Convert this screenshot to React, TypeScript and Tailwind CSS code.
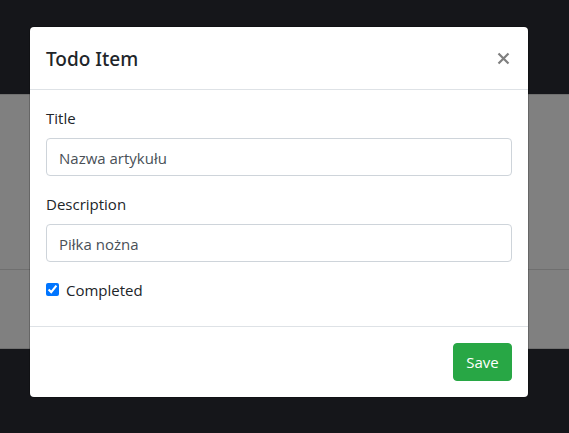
import { useState } from "react";

type TextFieldProps = {
  id: string;
  label: string;
  value: string;
  onChange: (value: string) => void;
};

function TextField({ id, label, value, onChange }: TextFieldProps) {
  return (
    <div className="mb-4">
      <label htmlFor={id} className="mb-2 block">
        {label}
      </label>
      <input
        id={id}
        type="text"
        value={value}
        onChange={(e) => onChange(e.target.value)}
        className="block h-[38px] w-full rounded border border-[#ced4da] bg-white px-3 pt-0.5 text-[#495057] outline-none focus:border-[#80bdff]"
      />
    </div>
  );
}

function Backdrop() {
  return (
    <div className="flex min-h-screen flex-col bg-[#15161a]" aria-hidden="true">
      <div className="h-[94px]" />
      <div className="border-y border-[#6f6f6f] bg-[#808080]">
        <div className="h-[174px]" />
        <div className="h-[79px] border-t border-[#6f6f6f]" />
      </div>
    </div>
  );
}

export default function App() {
  const [title, setTitle] = useState("Nazwa artykułu");
  const [description, setDescription] = useState("Piłka nożna");
  const [completed, setCompleted] = useState(true);

  return (
    <div className="relative text-[15px] leading-6 text-[#212529] [font-family:'Open_Sans','Noto_Sans',sans-serif]">
      <Backdrop />
      <div className="absolute inset-0 flex items-start justify-center pt-[27px] pr-[41px] pl-[30px]">
        <form
          role="dialog"
          aria-labelledby="dialog-title"
          onSubmit={(e) => e.preventDefault()}
          className="w-full max-w-[500px] rounded bg-white ring-1 ring-black/20"
        >
          <header className="flex h-[63px] items-center justify-between border-b border-[#dee2e6] px-4">
            <h5 id="dialog-title" className="pt-0.5 font-medium text-[19px] [font-family:'Noto_Sans','Open_Sans',sans-serif]">
              Todo Item
            </h5>
            <button type="button" aria-label="Close" className="py-2 pr-0.5 text-[#7f7f7f]">
              <svg width="13" height="13" viewBox="0 0 13 13" fill="none" stroke="currentColor" strokeWidth="2.2">
                <path d="M1.5 1.5l10 10M11.5 1.5l-10 10" />
              </svg>
            </button>
          </header>
          <div className="px-4 pt-4 pb-6">
            <TextField id="title" label="Title" value={title} onChange={setTitle} />
            <TextField id="description" label="Description" value={description} onChange={setDescription} />
            <label className="flex items-center gap-[7px]">
              <input
                type="checkbox"
                checked={completed}
                onChange={(e) => setCompleted(e.target.checked)}
                className="mb-0.5 size-[13px] accent-[#0075ff]"
              />
              Completed
            </label>
          </div>
          <footer className="flex justify-end border-t border-[#dee2e6] p-4">
            <button
              type="submit"
              className="h-[38px] min-w-[59px] rounded border border-[#28a745] bg-[#28a745] px-3 text-white"
            >
              Save
            </button>
          </footer>
        </form>
      </div>
    </div>
  );
}
